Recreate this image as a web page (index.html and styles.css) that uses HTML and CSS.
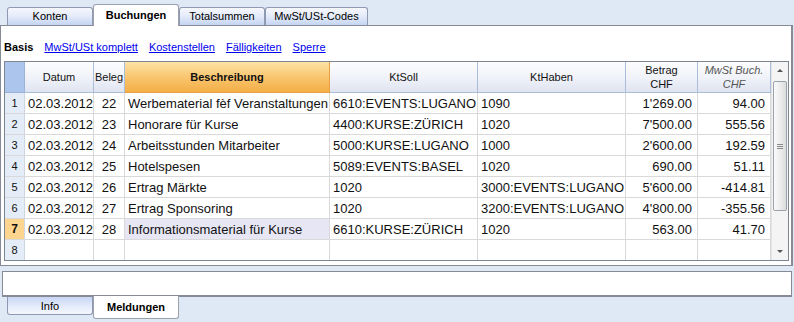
FILE: index.html
```html
<!DOCTYPE html>
<html lang="de">
<head>
    <meta charset="UTF-8">
    <title>Buchungen</title>
    <link rel="stylesheet" href="styles.css">
</head>
<body>

<div class="tabs">
    <div class="tab">Konten</div>
    <div class="tab active">Buchungen</div>
    <div class="tab">Totalsummen</div>
    <div class="tab wide">MwSt/USt-Codes</div>
</div>

<div class="panel">
    <div class="views">
        <b>Basis</b>
        <a href="#">MwSt/USt komplett</a>
        <a href="#">Kostenstellen</a>
        <a href="#">Fälligkeiten</a>
        <a href="#">Sperre</a>
    </div>

    <div class="grid">
        <table>
            <colgroup>
                <col style="width:20px">
                <col style="width:69px">
                <col style="width:31px">
                <col style="width:205px">
                <col style="width:148px">
                <col style="width:148px">
                <col style="width:72px">
                <col style="width:73px">
            </colgroup>
            <thead>
                <tr>
                    <th class="corner"></th>
                    <th>Datum</th>
                    <th>Beleg</th>
                    <th class="sorted">Beschreibung</th>
                    <th>KtSoll</th>
                    <th>KtHaben</th>
                    <th>Betrag<br>CHF</th>
                    <th class="calc">MwSt Buch.<br>CHF</th>
                </tr>
            </thead>
            <tbody>
                <tr><td class="nr">1</td><td>02.03.2012</td><td class="c">22</td><td>Werbematerial fèf Veranstaltungen</td><td>6610:EVENTS:LUGANO</td><td>1090</td><td class="r">1'269.00</td><td class="r">94.00</td></tr>
                <tr><td class="nr">2</td><td>02.03.2012</td><td class="c">23</td><td>Honorare für Kurse</td><td>4400:KURSE:ZÜRICH</td><td>1020</td><td class="r">7'500.00</td><td class="r">555.56</td></tr>
                <tr><td class="nr">3</td><td>02.03.2012</td><td class="c">24</td><td>Arbeitsstunden Mitarbeiter</td><td>5000:KURSE:LUGANO</td><td>1000</td><td class="r">2'600.00</td><td class="r">192.59</td></tr>
                <tr><td class="nr">4</td><td>02.03.2012</td><td class="c">25</td><td>Hotelspesen</td><td>5089:EVENTS:BASEL</td><td>1020</td><td class="r">690.00</td><td class="r">51.11</td></tr>
                <tr><td class="nr">5</td><td>02.03.2012</td><td class="c">26</td><td>Ertrag Märkte</td><td>1020</td><td>3000:EVENTS:LUGANO</td><td class="r">5'600.00</td><td class="r">-414.81</td></tr>
                <tr><td class="nr">6</td><td>02.03.2012</td><td class="c">27</td><td>Ertrag Sponsoring</td><td>1020</td><td>3200:EVENTS:LUGANO</td><td class="r">4'800.00</td><td class="r">-355.56</td></tr>
                <tr class="current"><td class="nr">7</td><td>02.03.2012</td><td class="c">28</td><td class="selected">Informationsmaterial für Kurse</td><td>6610:KURSE:ZÜRICH</td><td>1020</td><td class="r">563.00</td><td class="r">41.70</td></tr>
                <tr><td class="nr">8</td><td></td><td></td><td></td><td></td><td></td><td></td><td></td></tr>
            </tbody>
        </table>

        <div class="scrollbar">
            <div class="sb-btn"><span class="arrow up"></span></div>
            <div class="sb-thumb"><span class="grip"></span></div>
            <div class="sb-track"></div>
            <div class="sb-btn"><span class="arrow down"></span></div>
        </div>
    </div>
</div>

<div class="messages"></div>

<div class="tabs bottom">
    <div class="tab">Info</div>
    <div class="tab active">Meldungen</div>
</div>

</body>
</html>
```

FILE: styles.css
```css
body {
    margin: 0;
    width: 794px;
    height: 322px;
    overflow: hidden;
    background-color: #dfe9f5;
    font-family: "Liberation Sans", Arial, sans-serif;
    font-size: 11px;
    color: #000;
}

/* Reiter oben und unten */
.tabs {
    display: flex;
    align-items: flex-end;
    height: 25px;
    padding-left: 7px;
    box-sizing: border-box;
}
.tab {
    width: 86px;
    height: 18px;
    box-sizing: border-box;
    border: 1px solid #8e9ab2;
    border-bottom: none;
    border-radius: 3px 3px 0 0;
    background: linear-gradient(#f6f7fd, #e6ecfa 45%, #c5d5f2);
    text-align: center;
    line-height: 17px;
}
.tab.wide { width: 103px; }
.tab.active {
    height: 22px;
    background: #fff;
    font-weight: bold;
    line-height: 20px;
    position: relative;
    top: 1px;
    border-color: #9aa0ac;
}

.tabs.bottom {
    align-items: flex-start;
    height: 26px;
}
.tabs.bottom .tab {
    border: 1px solid #8e9ab2;
    border-top: none;
    border-radius: 0 0 3px 3px;
    background: linear-gradient(#c7d6f4, #e4ebfb 55%, #f4f6fd);
    line-height: 18px;
}
.tabs.bottom .tab.active {
    background: #fff;
    top: -1px;
    height: 23px;
    line-height: 23px;
    border-color: #9aa0ac;
}

/* Hauptbereich */
.panel {
    width: 793px;
    height: 241px;
    box-sizing: border-box;
    background: #fff;
    border: 1px solid #868b95;
    border-right-width: 2px;
}
.views {
    display: flex;
    gap: 11px;
    height: 14px;
    padding: 14px 0 0 3px;
    line-height: 14px;
}
.views a {
    color: #0000ee;
    text-decoration: underline;
}

.grid {
    display: flex;
    width: 785px;
    height: 200px;
    margin: 7px 0 0 3px;
    box-sizing: border-box;
    border: 1px solid #7d8591;
    overflow: hidden;
}

table {
    width: 766px;
    table-layout: fixed;
    border-collapse: separate;
    border-spacing: 0;
    font-size: 13px;
}
thead tr { height: 31px; }
tbody tr { height: 21px; }

th {
    padding: 0;
    font-weight: normal;
    font-size: 11px;
    line-height: 14px;
    border-right: 1px solid #aabddb;
    border-bottom: 1px solid #aabddb;
    background: linear-gradient(#fdfdfe, #f1f3f9 50%, #dfe4f1);
    color: #111;
}
th.corner {
    background: #abc5ec;
    border-color: #9cb3d8;
}
th.sorted {
    background: linear-gradient(#fce3a6, #f8c36a 55%, #f4ae47);
    border-right-color: #e8a040;
    border-bottom-color: #e8a040;
    font-weight: bold;
}
th.calc {
    font-style: italic;
    color: #555;
}

td {
    padding: 0 3px;
    white-space: nowrap;
    overflow: hidden;
    border-right: 1px solid #d9d9d9;
    border-bottom: 1px solid #d9d9d9;
    color: #111;
}
td.c { text-align: center; }
td.r { text-align: right; padding-right: 5px; }
td.nr {
    padding: 0;
    text-align: center;
    font-size: 11px;
    background: #e4ecf7;
    border-right-color: #cfd6e2;
}
tr.current td.nr {
    background: #fed58e;
    font-weight: bold;
    font-size: 12px;
}
td.selected { background: #e6e6f5; }

/* Bildlaufleiste */
.scrollbar {
    display: flex;
    flex-direction: column;
    width: 17px;
    background: #f4f4f4;
    border-left: 1px solid #e4e4e4;
}
.sb-btn {
    height: 17px;
    display: flex;
    align-items: center;
    justify-content: center;
}
.arrow {
    width: 0;
    height: 0;
    border-left: 3px solid transparent;
    border-right: 3px solid transparent;
}
.arrow.up { border-bottom: 3px solid #555; }
.arrow.down { border-top: 3px solid #555; }
.sb-thumb {
    height: 130px;
    margin: 2px 1px 0;
    box-sizing: border-box;
    border: 1px solid #9aa1ab;
    border-radius: 2px;
    background: linear-gradient(to right, #fafafa, #eaeaea 60%, #dcdcdc);
    display: flex;
    align-items: center;
    justify-content: center;
}
.grip {
    width: 6px;
    height: 5px;
    border-top: 1px solid #8a8a8a;
    border-bottom: 1px solid #8a8a8a;
    box-sizing: border-box;
    background: linear-gradient(transparent 1px, #8a8a8a 1px, #8a8a8a 2px, transparent 2px);
}
.sb-track { flex: 1; }

/* Meldungen */
.messages {
    width: 790px;
    height: 26px;
    margin: 5px 0 0 2px;
    box-sizing: border-box;
    background: #fff;
    border: 1px solid #868b95;
    border-bottom-width: 2px;
}
```
